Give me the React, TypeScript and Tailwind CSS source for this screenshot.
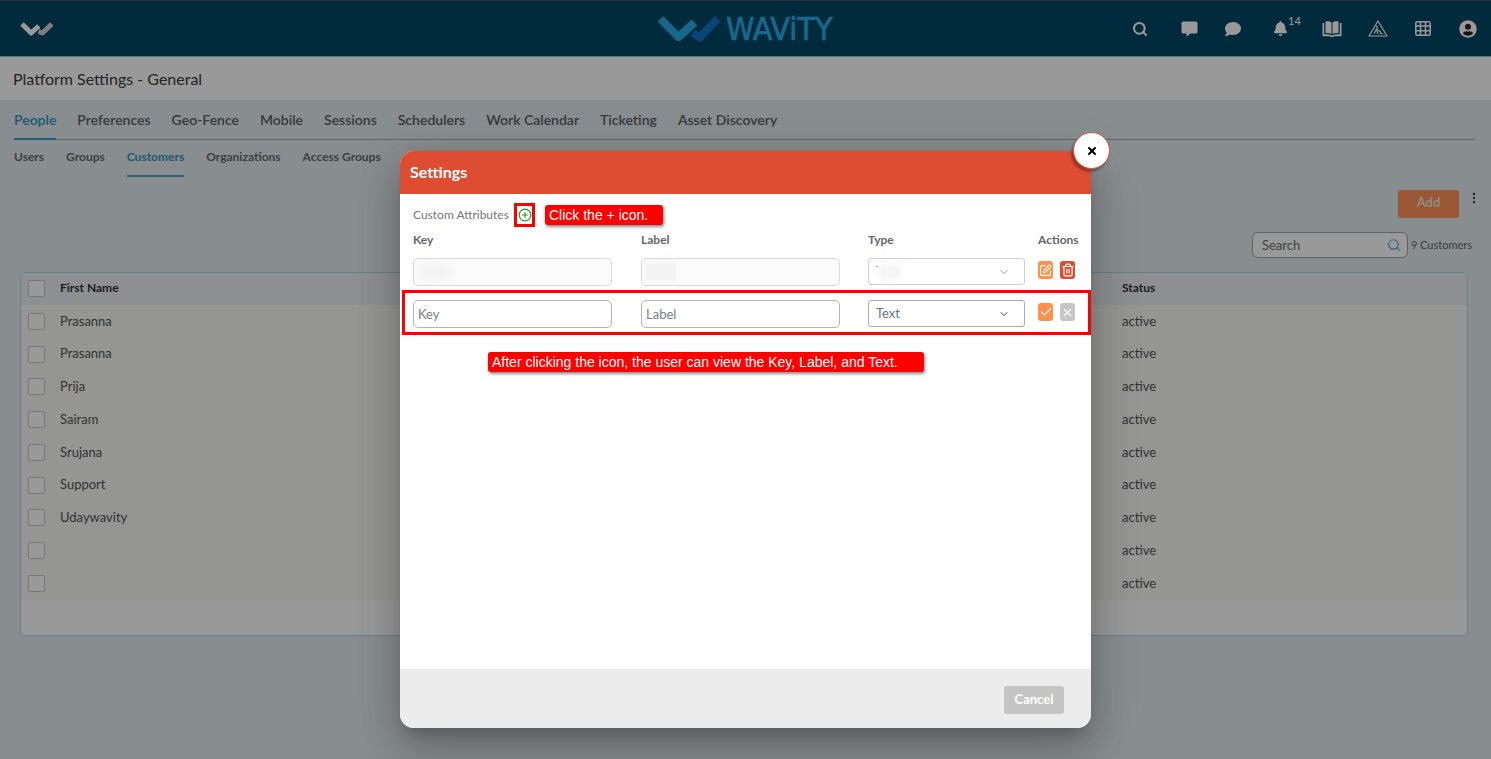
import type { ReactNode } from "react"
import { FaBell, FaComment, FaUserCircle } from "react-icons/fa"
import { Check, ChevronDown, CirclePlus, EllipsisVertical, Search, SquarePen, Trash2, X } from "lucide-react"

const tabs = [
  "People",
  "Preferences",
  "Geo-Fence",
  "Mobile",
  "Sessions",
  "Schedulers",
  "Work Calendar",
  "Ticketing",
  "Asset Discovery",
]

const subTabs = ["Users", "Groups", "Customers", "Organizations", "Access Groups"]

const customers = [
  { firstName: "Prasanna", status: "active" },
  { firstName: "Prasanna", status: "active" },
  { firstName: "Prija", status: "active" },
  { firstName: "Sairam", status: "active" },
  { firstName: "Srujana", status: "active" },
  { firstName: "Support", status: "active" },
  { firstName: "Udaywavity", status: "active" },
  { firstName: "", status: "active" },
  { firstName: "", status: "active" },
]

function SmallLogo() {
  return (
    <svg width="36" height="18" viewBox="0 0 36 18" fill="none" strokeWidth="5" strokeLinejoin="round">
      <path d="M18.500 11.500L22.500 13L31.800 4" stroke="#d2d4d6" />
      <path d="M2 4L11.200 13L18.800 6" stroke="#ffffff" />
    </svg>
  )
}

function BrandLogo() {
  return (
    <svg width="184" height="42" viewBox="-3 -6 184 42" fill="none">
      <path d="M36 19L42.500 23.500L60.500 5" stroke="#0f76c8" strokeWidth="8" strokeLinejoin="round" />
      <path d="M3.500 5L21.500 23L37.500 8.500" stroke="#26b0e8" strokeWidth="8" strokeLinejoin="round" />
      <text
        x="69"
        y="26"
        fill="#26b0e8"
        stroke="#26b0e8"
        strokeWidth="0.600"
        fontFamily="DejaVu Sans Condensed, Roboto, sans-serif"
        fontSize="32"
      >
        WAViTY
      </text>
    </svg>
  )
}

function BookIcon() {
  return (
    <svg width="20" height="16" viewBox="0 0 20 16" fill="#fff">
      <path d="M3.500 0.500C6 0 8 0.500 9.500 1.500V13C8 12 6 11.700 3.500 12Z" />
      <path d="M16.500 0.500C14 0 12 0.500 10.500 1.500V13C12 12 14 11.700 16.500 12Z" />
      <path d="M0.500 2H2.200V13.300C5 13 7.500 13.300 9 14.200H11C12.500 13.300 15 13 17.800 13.300V2H19.500V15.200H12L11.500 16H8.500L8 15.200H0.500Z" />
    </svg>
  )
}

function RoadworksIcon() {
  return (
    <svg width="20" height="17" viewBox="0 0 20 17" fill="none" stroke="#fff" strokeLinejoin="round">
      <path d="M10 1L19 16H1Z" strokeWidth="1.200" />
      <circle cx="9" cy="6.800" r="1" fill="#fff" stroke="none" />
      <path d="M8.500 8.500L7.500 11L6 13.500M8 10.500L9.500 11.500V13.800M8.800 8.500L10.500 10.500L13 12" strokeWidth="1.100" />
      <path d="M11 14L12.800 12.200L15.500 14Z" fill="#fff" stroke="none" />
    </svg>
  )
}

function GridIcon() {
  return (
    <svg width="16" height="15" viewBox="0 0 16 15" fill="none" stroke="#fff" strokeWidth="1.500">
      <rect x="0.800" y="0.800" width="14.400" height="13.400" rx="1.500" />
      <path d="M1 5H15M1 9.700H15M5.500 1V14M10.500 1V14" />
    </svg>
  )
}

function IconButton({ label, className, children }: { label: string; className: string; children: ReactNode }) {
  return (
    <button aria-label={label} className={`flex h-[18px] w-[15px] items-center justify-center rounded-[3px] text-white ${className}`}>
      {children}
    </button>
  )
}

function TopBar() {
  return (
    <header className="relative flex h-[57px] items-center justify-between border-t border-b border-t-[#50555f] border-b-[#8cc8d8] bg-[#034864] pl-5 pr-[14px] text-white">
      <SmallLogo />
      <div className="absolute left-1/2 -translate-x-1/2">
        <BrandLogo />
      </div>
      <div className="flex items-center">
        <button aria-label="Search" className="mr-[33px]">
          <Search size={16} strokeWidth={3} />
        </button>
        <button aria-label="Messages" className="mr-[27px]">
          <svg width="17" height="16" viewBox="0 0 17 16" fill="#fff">
            <path d="M2 0.500H15Q16.500 0.500 16.500 2V11Q16.500 12.500 15 12.500H9.500L5.500 15.800V12.500H2Q0.500 12.500 0.500 11V2Q0.500 0.500 2 0.500Z" />
          </svg>
        </button>
        <button aria-label="Chat" className="mr-8">
          <FaComment size={16} />
        </button>
        <button aria-label="Notifications" className="relative mr-[34px]">
          <FaBell size={15} />
          <span className="absolute -top-2 left-[15px] text-[11px] leading-4">14</span>
        </button>
        <button aria-label="Knowledge base" className="mr-[26px]">
          <BookIcon />
        </button>
        <button aria-label="Maintenance" className="mr-[27px]">
          <RoadworksIcon />
        </button>
        <button aria-label="Apps" className="mr-7">
          <GridIcon />
        </button>
        <button aria-label="Account" className="rounded-full bg-[#222]">
          <FaUserCircle size={18} />
        </button>
      </div>
    </header>
  )
}

function CheckBox({ label }: { label: string }) {
  return (
    <input
      type="checkbox"
      aria-label={label}
      className="block h-[17px] w-[17px] appearance-none rounded-[2px] border border-[#c3c6cc] bg-white"
    />
  )
}

function CustomerTable() {
  return (
    <div className="mt-[14px] mr-[9px] ml-[6px] overflow-hidden rounded-[5px] border border-[#a8d8e8] bg-white pb-[35px]">
      <table className="h-[327px] w-full table-fixed text-left text-[13px] text-[#555]">
        <thead>
          <tr className="h-8 bg-[#edeef1] text-[#333]">
            <th className="w-[39px] pb-[2px] pl-[7px]">
              <CheckBox label="Select all" />
            </th>
            <th className="pb-[2px] text-[12px] font-bold">First Name</th>
            <th className="w-[345px] pb-[2px] text-[12px] font-bold">Status</th>
          </tr>
        </thead>
        <tbody>
          {customers.map((customer, index) => (
            <tr key={index} className="bg-[#f8f9f6]">
              <td className="pl-[7px]">
                <CheckBox label={`Select customer ${index + 1}`} />
              </td>
              <td>{customer.firstName}</td>
              <td>{customer.status}</td>
            </tr>
          ))}
        </tbody>
      </table>
    </div>
  )
}

function TypeSelect({ id, disabled }: { id: string; disabled?: boolean }) {
  return (
    <div className="relative w-[157px]">
      <select
        id={id}
        aria-label="Type"
        disabled={disabled}
        className="block h-[27px] w-full appearance-none rounded-[3px] border border-[#a9acb0] bg-white px-[7px] text-[13px] text-[#6b7280] disabled:border-[#cfcfcf] disabled:text-transparent disabled:opacity-100"
      >
        <option>Text</option>
      </select>
      <ChevronDown
        size={12}
        className={disabled ? "absolute top-2 right-[15px] text-[#999]" : "absolute top-2 right-[15px] text-[#444]"}
      />
      {disabled && (
        <>
          <span className="absolute top-2 left-2 h-px w-[2px] bg-[#999]" />
          <span className="absolute top-[6px] left-[10px] h-4 w-6 bg-[#f6f6f6] blur-[3px]" />
        </>
      )}
    </div>
  )
}

const inputClass =
  "block h-7 w-[199px] rounded-[5px] border border-[#b5b5b8] bg-white px-1 text-[13px] text-[#555] placeholder:text-[#7a7d87] disabled:border-[#d9d9d9] disabled:bg-[#fbfbfb]"
const rowGrid = "grid grid-cols-[228px_227px_170px_1fr]"

function SettingsDialog() {
  return (
    <div
      role="dialog"
      aria-label="Settings"
      className="relative w-[691px] self-start rounded-[14px] bg-white shadow-[0_11px_15px_-7px_rgba(0,0,0,0.2),0_24px_38px_3px_rgba(0,0,0,0.14),0_9px_46px_8px_rgba(0,0,0,0.12)]"
    >
      <h2 className="flex h-[43px] items-center rounded-t-[14px] bg-[#de4c32] px-[10px] pb-[2px] text-[16px] font-bold text-white">
        Settings
      </h2>
      <button
        aria-label="Close"
        className="absolute -top-[19px] -right-[19px] flex h-[37px] w-[37px] items-center justify-center rounded-full border border-[#de4c32] bg-white text-black shadow-[-2px_3px_2px_rgba(0,0,0,0.3)]"
      >
        <X size={12} strokeWidth={4} />
      </button>

      <div className="h-[475px] pt-[9px]">
        <div className="flex h-6 items-center px-[13px] text-[12px] text-[#777]">
          <span className="w-[99px]">Custom Attributes</span>
          <button
            aria-label="Add attribute"
            className="ml-[2px] flex h-6 w-[21px] items-center justify-center border-[3px] border-[#f00] text-[#1f9d1f]"
          >
            <CirclePlus size={14} strokeWidth={2} className="shrink-0" />
          </button>
          <span className="ml-[10px] h-5 w-[118px] rounded-[3px] bg-[#f00] px-1 font-['Liberation_Sans',sans-serif] text-[14px] leading-5 text-white shadow-[1px_2px_3px_rgba(0,0,0,0.45)]">
            Click the + icon.
          </span>
        </div>
        <div className={`${rowGrid} mt-[3px] px-[13px] text-[12px] leading-5 font-bold text-[#666]`}>
          <label htmlFor="new-key">Key</label>
          <label htmlFor="new-label">Label</label>
          <label htmlFor="new-type">Type</label>
          <span>Actions</span>
        </div>
        <div className={`${rowGrid} mt-2 items-start px-[13px]`}>
          <div className="relative">
            <input aria-label="Saved key" disabled className={inputClass} />
            <span className="absolute top-2 left-2 h-3 w-7 bg-[#efefef] blur-[5px]" />
          </div>
          <div className="relative">
            <input aria-label="Saved label" disabled className={inputClass} />
            <span className="absolute top-[5px] left-[5px] h-[18px] w-[30px] bg-[#f3f3f3] blur-[1px]" />
          </div>
          <TypeSelect id="saved-type" disabled />
          <div className="mt-[3px] flex gap-[7px]">
            <IconButton label="Edit" className="bg-[#ff914d]">
              <SquarePen size={13} strokeWidth={2} />
            </IconButton>
            <IconButton label="Delete" className="bg-[#de4c32]">
              <Trash2 size={14} strokeWidth={2} />
            </IconButton>
          </div>
        </div>
        <div className={`${rowGrid} mt-1 ml-[2px] h-[45px] items-start border-[3px] border-[#f00] px-2 pt-[7px]`}>
          <input id="new-key" placeholder="Key" className={inputClass} />
          <input id="new-label" placeholder="Label" className={inputClass} />
          <TypeSelect id="new-type" />
          <div className="mt-[3px] flex gap-[7px]">
            <IconButton label="Save" className="bg-[#ff914d]">
              <Check size={14} strokeWidth={2} />
            </IconButton>
            <IconButton label="Discard" className="bg-[#c6c6c6]">
              <X size={13} strokeWidth={2} />
            </IconButton>
          </div>
        </div>
        <p className="mt-[17px] ml-[88px] h-5 w-[436px] rounded-[3px] bg-[#f00] px-1 font-['Liberation_Sans',sans-serif] text-[14px] leading-5 text-white shadow-[1px_2px_3px_rgba(0,0,0,0.45)]">
          After clicking the icon, the user can view the Key, Label, and Text.
        </p>
      </div>

      <div className="flex justify-end rounded-b-[14px] bg-[#ececec] px-[27px] pt-[17px] pb-[14px]">
        <button className="h-7 w-[60px] rounded-[3px] bg-[#c5c5c5] text-[13px] font-bold text-white">Cancel</button>
      </div>
    </div>
  )
}

export default function App() {
  return (
    <div className="relative min-h-screen bg-[#e3ebf0] font-['Lato',sans-serif]">
      <TopBar />
      <div className="flex h-[43px] items-center bg-white px-[13px] text-[16px] text-[#3c3c3c]">
        <h1>Platform Settings - General</h1>
      </div>

      <main className="px-[14px]">
        <nav className="mr-[2px] flex h-10 gap-[21px] border-b border-[#a5aaad] text-[14px] font-semibold text-[#5c6062]">
          {tabs.map((tab) => (
            <a
              key={tab}
              href="#"
              className={
                tab === "People"
                  ? "-mb-px flex items-center border-b-2 border-[#2f9bc8] text-[#3295c0]"
                  : "flex items-center"
              }
            >
              {tab}
            </a>
          ))}
        </nav>
        <nav className="flex h-[37px] gap-[22px] text-[12px] font-bold text-[#666a6c]">
          {subTabs.map((tab) => (
            <a
              key={tab}
              href="#"
              className={
                tab === "Customers"
                  ? "border-b-2 border-[#4fa8cc] pt-2 text-[#3295c0]"
                  : "pt-2"
              }
            >
              {tab}
            </a>
          ))}
        </nav>

        <div className="-mr-1 mt-[13px] flex justify-end">
          <button className="h-7 w-[61px] rounded-[3px] bg-[#ff9155] pb-[2px] text-[13px] font-bold text-[#f2e6dd]">Add</button>
          <button aria-label="More" className="ml-2 h-4 text-[#333]">
            <EllipsisVertical size={14} strokeWidth={2} />
          </button>
        </div>
        <div className="mt-[14px] mr-[5px] flex items-center justify-end">
          <label className="relative">
            <input
              placeholder="Search"
              aria-label="Search customers"
              className="block h-[26px] w-[156px] rounded-[6px] border border-[#a0a3a6] bg-white pl-[9px] text-[13px] placeholder:text-[#6b6d70]"
            />
            <Search size={14} strokeWidth={2} className="absolute top-[6px] right-[7px] text-[#3fa5cc]" />
          </label>
          <span className="ml-[3px] text-[11px] text-[#666]">9 Customers</span>
        </div>
        <CustomerTable />
      </main>

      <div className="absolute inset-0 flex justify-center bg-black/40 pt-[151px]">
        <SettingsDialog />
      </div>
    </div>
  )
}
